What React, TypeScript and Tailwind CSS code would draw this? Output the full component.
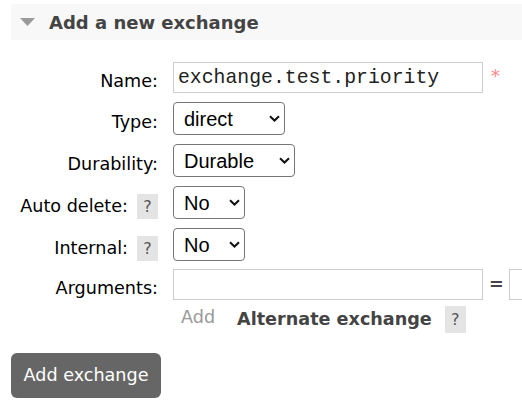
import { ReactNode } from 'react';

const Help = ({ className = '' }: { className?: string }) => (
  <span
    className={`flex shrink-0 w-[21px] h-[25px] items-center justify-center bg-[#e4e4e4] text-[#555] text-[16px] ${className}`}
  >
    ?
  </span>
);

function Select({ value, width, options }: { value: string; width: string; options: string[] }) {
  return (
    <div className={`relative shrink-0 h-[33px] ${width}`}>
      <select
        defaultValue={value}
        className="appearance-none w-full h-full border border-[#767676] rounded-[4px] bg-white pl-[10px] pr-[22px] text-[20px] text-black font-['Liberation_Sans',Arial,sans-serif] outline-none"
      >
        {options.map(o => (
          <option key={o}>{o}</option>
        ))}
      </select>
      <svg
        className="absolute right-[5px] top-[13px] pointer-events-none"
        width="11"
        height="7"
        viewBox="0 0 11 7"
        fill="none"
      >
        <path d="M1 1.2l4.5 4.3L10 1.2" stroke="#111" strokeWidth="2" />
      </svg>
    </div>
  );
}

function Row({ label, help, h, children, className = '' }: { label: string; help?: boolean; h: string; children: ReactNode; className?: string }) {
  return (
    <div className={`flex items-center ${h} ${className}`}>
      <div className="w-[158px] shrink-0 flex justify-end items-center gap-[9px] pt-[8px]">
        <span className="whitespace-nowrap">{label}</span>
        {help && <Help />}
      </div>
      <div className="ml-[15px] shrink-0 flex items-center">{children}</div>
    </div>
  );
}

export default function App() {
  return (
    <div className="w-[522px] h-[407px] overflow-hidden bg-white text-black text-[17.6px] font-['DejaVu_Sans',Verdana,sans-serif]">
      <div className="ml-[11px] mt-[4px] h-[36px] bg-[#f8f8f8] flex items-center">
        <svg className="ml-[9px]" width="15" height="8" viewBox="0 0 15 8">
          <path d="M0 0h15L7.5 8z" fill="#9a9a9a" />
        </svg>
        <h2 className="ml-[14px] text-[18px] font-bold text-[#444]">Add a new exchange</h2>
      </div>

      <div className="mt-[22px] flex flex-col">
        <Row label="Name:" h="h-[31px]" className="mb-[9px]">
          <input
            defaultValue="exchange.test.priority"
            className="w-[310px] h-[31px] border border-[#cccccc] px-[4px] text-[19.8px] text-[#222] font-['Liberation_Mono','Courier_New',monospace] outline-none"
          />
          <span className="ml-[8px] text-[18px] text-[#ff8a8a] -mt-[4px]">*</span>
        </Row>
        <Row label="Type:" h="h-[33px]" className="mb-[9px]">
          <Select value="direct" width="w-[112px]" options={['direct', 'fanout', 'headers', 'topic']} />
        </Row>
        <Row label="Durability:" h="h-[33px]" className="mb-[9px]">
          <Select value="Durable" width="w-[122px]" options={['Durable', 'Transient']} />
        </Row>
        <Row label="Auto delete:" help h="h-[33px]" className="mb-[9px]">
          <Select value="No" width="w-[72px]" options={['No', 'Yes']} />
        </Row>
        <Row label="Internal:" help h="h-[33px]" className="mb-[8px]">
          <Select value="No" width="w-[72px]" options={['No', 'Yes']} />
        </Row>
        <Row label="Arguments:" h="h-[31px]">
          <input className="w-[310px] h-[31px] border border-[#cccccc] outline-none" />
          <span className="ml-[6px] font-bold text-[#444]">=</span>
          <input className="ml-[5px] w-[120px] h-[31px] border border-[#cccccc] outline-none" />
        </Row>

        <div className="mt-[6px] ml-[181px] flex items-center h-[27px]">
          <span className="text-[#999] -mt-[5px]">Add</span>
          <span className="ml-[22px] font-bold text-[#444] whitespace-nowrap">Alternate exchange</span>
          <Help className="ml-[13px] h-[27px]" />
        </div>
      </div>

      <button className="mt-[20px] ml-[11px] w-[150px] h-[45px] rounded-[6px] bg-[#666] text-white text-[17.6px]">
        Add exchange
      </button>
    </div>
  );
}
